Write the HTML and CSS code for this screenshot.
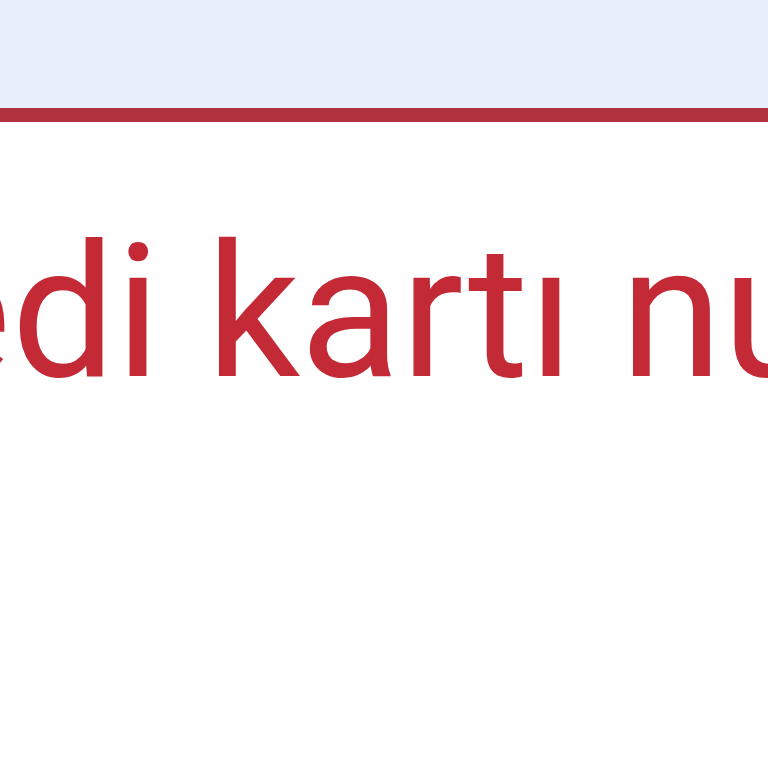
FILE: index.html
```html
<!DOCTYPE html>
<html lang="tr">
<head>
<meta charset="utf-8">
<link rel="stylesheet" href="styles.css">
</head>
<body>
<div class="field">
  <div class="input"></div>
  <div class="error"><span class="error-text">Kredi kartı numarası</span></div>
</div>
</body>
</html>
```
FILE: styles.css
```css
html, body {
  margin: 0;
  padding: 0;
  width: 768px;
  height: 768px;
  overflow: hidden;
  background: #ffffff;
}
.field {
  display: flex;
  flex-direction: column;
}
.input {
  height: 108px;
  background: #e8effc;
  border-bottom: 14px solid #b1323e;
}
.error {
  overflow: hidden;
  white-space: nowrap;
  padding-top: 91px;
}
.error-text {
  display: inline-block;
  margin-left: -264px;
  font-family: Roboto, "Noto Sans", sans-serif;
  font-size: 185px;
  line-height: 200px;
  color: #c42a36;
}
```
